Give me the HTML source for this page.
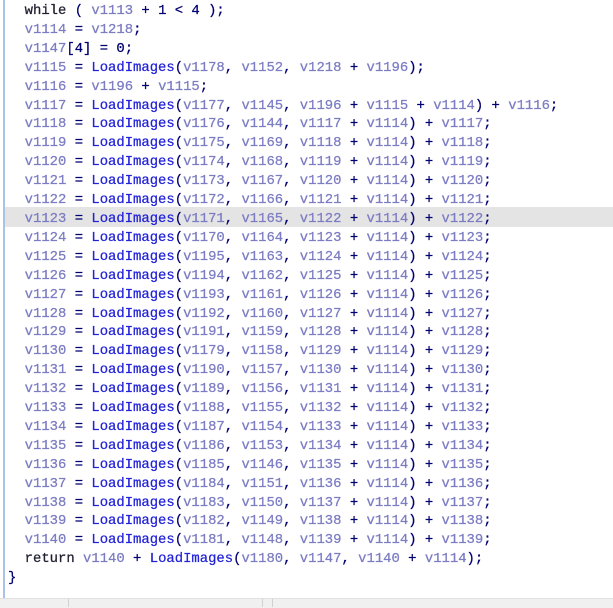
<!DOCTYPE html>
<html><head><style>
body{margin:0;width:613px;height:607px;background:#fff;overflow:hidden;position:relative;font-family:"Liberation Mono",monospace;font-size:13.9px}
.bar{position:absolute;left:3px;top:0;width:2px;height:598px;background:#a9c3e6}
.hl{position:absolute;left:5px;top:207px;width:608px;height:20px;background:#e4e4e4}
pre{position:absolute;left:8px;top:2px;margin:0;font:inherit;line-height:18.9px;color:#000070;font-weight:normal;-webkit-text-stroke:0.25px}
.v{color:#7c7cc4}.f{color:#2222d8}.k{color:#202030}
.bot{position:absolute;left:0;top:598px;width:613px;height:9px;background:#f0f0f0;border-top:1px solid #e0e0e0}
.s{position:absolute;top:599px;width:1px;height:8px;background:#d0d0d0}
</style></head><body>
<div class="hl"></div><div class="bar"></div>
<pre>  <span class="k">while</span> ( <span class="v">v1113</span> + 1 &lt; 4 );
  <span class="v">v1114</span> = <span class="v">v1218</span>;
  <span class="v">v1147</span>[4] = 0;
  <span class="v">v1115</span> = <span class="f">LoadImages</span>(<span class="v">v1178</span>, <span class="v">v1152</span>, <span class="v">v1218</span> + <span class="v">v1196</span>);
  <span class="v">v1116</span> = <span class="v">v1196</span> + <span class="v">v1115</span>;
  <span class="v">v1117</span> = <span class="f">LoadImages</span>(<span class="v">v1177</span>, <span class="v">v1145</span>, <span class="v">v1196</span> + <span class="v">v1115</span> + <span class="v">v1114</span>) + <span class="v">v1116</span>;
  <span class="v">v1118</span> = <span class="f">LoadImages</span>(<span class="v">v1176</span>, <span class="v">v1144</span>, <span class="v">v1117</span> + <span class="v">v1114</span>) + <span class="v">v1117</span>;
  <span class="v">v1119</span> = <span class="f">LoadImages</span>(<span class="v">v1175</span>, <span class="v">v1169</span>, <span class="v">v1118</span> + <span class="v">v1114</span>) + <span class="v">v1118</span>;
  <span class="v">v1120</span> = <span class="f">LoadImages</span>(<span class="v">v1174</span>, <span class="v">v1168</span>, <span class="v">v1119</span> + <span class="v">v1114</span>) + <span class="v">v1119</span>;
  <span class="v">v1121</span> = <span class="f">LoadImages</span>(<span class="v">v1173</span>, <span class="v">v1167</span>, <span class="v">v1120</span> + <span class="v">v1114</span>) + <span class="v">v1120</span>;
  <span class="v">v1122</span> = <span class="f">LoadImages</span>(<span class="v">v1172</span>, <span class="v">v1166</span>, <span class="v">v1121</span> + <span class="v">v1114</span>) + <span class="v">v1121</span>;
  <span class="v">v1123</span> = <span class="f">LoadImages</span>(<span class="v">v1171</span>, <span class="v">v1165</span>, <span class="v">v1122</span> + <span class="v">v1114</span>) + <span class="v">v1122</span>;
  <span class="v">v1124</span> = <span class="f">LoadImages</span>(<span class="v">v1170</span>, <span class="v">v1164</span>, <span class="v">v1123</span> + <span class="v">v1114</span>) + <span class="v">v1123</span>;
  <span class="v">v1125</span> = <span class="f">LoadImages</span>(<span class="v">v1195</span>, <span class="v">v1163</span>, <span class="v">v1124</span> + <span class="v">v1114</span>) + <span class="v">v1124</span>;
  <span class="v">v1126</span> = <span class="f">LoadImages</span>(<span class="v">v1194</span>, <span class="v">v1162</span>, <span class="v">v1125</span> + <span class="v">v1114</span>) + <span class="v">v1125</span>;
  <span class="v">v1127</span> = <span class="f">LoadImages</span>(<span class="v">v1193</span>, <span class="v">v1161</span>, <span class="v">v1126</span> + <span class="v">v1114</span>) + <span class="v">v1126</span>;
  <span class="v">v1128</span> = <span class="f">LoadImages</span>(<span class="v">v1192</span>, <span class="v">v1160</span>, <span class="v">v1127</span> + <span class="v">v1114</span>) + <span class="v">v1127</span>;
  <span class="v">v1129</span> = <span class="f">LoadImages</span>(<span class="v">v1191</span>, <span class="v">v1159</span>, <span class="v">v1128</span> + <span class="v">v1114</span>) + <span class="v">v1128</span>;
  <span class="v">v1130</span> = <span class="f">LoadImages</span>(<span class="v">v1179</span>, <span class="v">v1158</span>, <span class="v">v1129</span> + <span class="v">v1114</span>) + <span class="v">v1129</span>;
  <span class="v">v1131</span> = <span class="f">LoadImages</span>(<span class="v">v1190</span>, <span class="v">v1157</span>, <span class="v">v1130</span> + <span class="v">v1114</span>) + <span class="v">v1130</span>;
  <span class="v">v1132</span> = <span class="f">LoadImages</span>(<span class="v">v1189</span>, <span class="v">v1156</span>, <span class="v">v1131</span> + <span class="v">v1114</span>) + <span class="v">v1131</span>;
  <span class="v">v1133</span> = <span class="f">LoadImages</span>(<span class="v">v1188</span>, <span class="v">v1155</span>, <span class="v">v1132</span> + <span class="v">v1114</span>) + <span class="v">v1132</span>;
  <span class="v">v1134</span> = <span class="f">LoadImages</span>(<span class="v">v1187</span>, <span class="v">v1154</span>, <span class="v">v1133</span> + <span class="v">v1114</span>) + <span class="v">v1133</span>;
  <span class="v">v1135</span> = <span class="f">LoadImages</span>(<span class="v">v1186</span>, <span class="v">v1153</span>, <span class="v">v1134</span> + <span class="v">v1114</span>) + <span class="v">v1134</span>;
  <span class="v">v1136</span> = <span class="f">LoadImages</span>(<span class="v">v1185</span>, <span class="v">v1146</span>, <span class="v">v1135</span> + <span class="v">v1114</span>) + <span class="v">v1135</span>;
  <span class="v">v1137</span> = <span class="f">LoadImages</span>(<span class="v">v1184</span>, <span class="v">v1151</span>, <span class="v">v1136</span> + <span class="v">v1114</span>) + <span class="v">v1136</span>;
  <span class="v">v1138</span> = <span class="f">LoadImages</span>(<span class="v">v1183</span>, <span class="v">v1150</span>, <span class="v">v1137</span> + <span class="v">v1114</span>) + <span class="v">v1137</span>;
  <span class="v">v1139</span> = <span class="f">LoadImages</span>(<span class="v">v1182</span>, <span class="v">v1149</span>, <span class="v">v1138</span> + <span class="v">v1114</span>) + <span class="v">v1138</span>;
  <span class="v">v1140</span> = <span class="f">LoadImages</span>(<span class="v">v1181</span>, <span class="v">v1148</span>, <span class="v">v1139</span> + <span class="v">v1114</span>) + <span class="v">v1139</span>;
  <span class="k">return</span> <span class="v">v1140</span> + <span class="f">LoadImages</span>(<span class="v">v1180</span>, <span class="v">v1147</span>, <span class="v">v1140</span> + <span class="v">v1114</span>);
}</pre>
<div class="bot"></div><div class="s" style="left:68px"></div><div class="s" style="left:262px"></div><div class="s" style="left:272px"></div>
</body></html>
